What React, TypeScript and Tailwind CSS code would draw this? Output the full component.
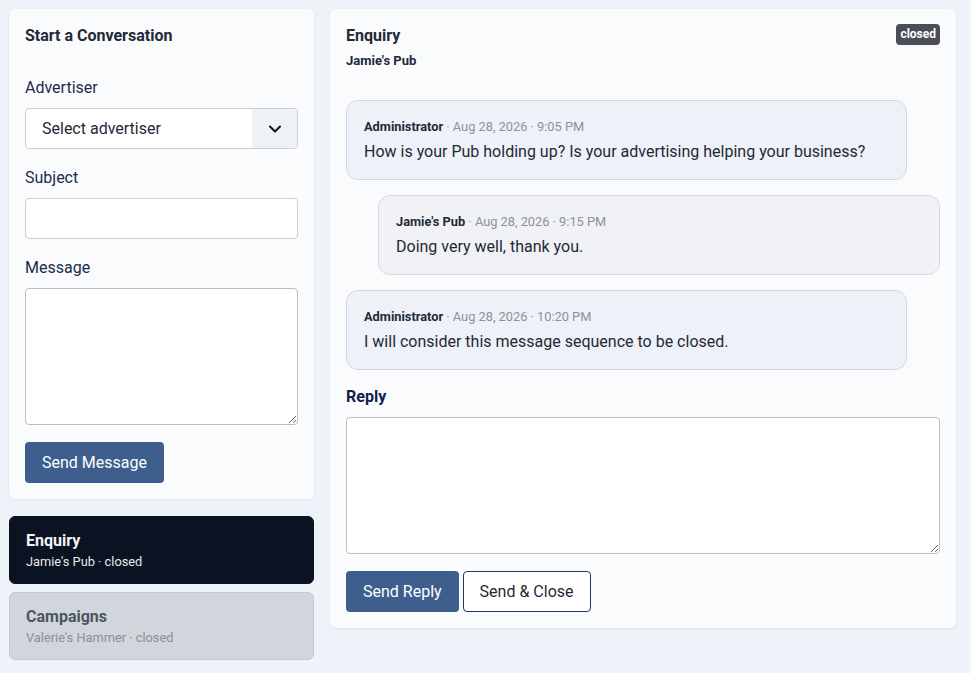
import { ChevronDown } from 'lucide-react'

const messages = [
  { author: 'Administrator', time: 'Aug 28, 2026 · 9:05 PM', body: 'How is your Pub holding up? Is your advertising helping your business?', mine: true },
  { author: "Jamie's Pub", time: 'Aug 28, 2026 · 9:15 PM', body: 'Doing very well, thank you.', mine: false },
  { author: 'Administrator', time: 'Aug 28, 2026 · 10:20 PM', body: 'I will consider this message sequence to be closed.', mine: true },
]

const conversations = [
  { title: 'Enquiry', sub: "Jamie's Pub · closed", active: true },
  { title: 'Campaigns', sub: "Valerie's Hammer · closed", active: false },
]

export default function App() {
  return (
    <div className="min-h-[673px] bg-[#eef2f9] p-[9px] font-['Roboto',sans-serif] text-[#1f2937]">
      <div className="flex gap-4">
        <aside className="w-[305px] shrink-0">
          <div className="rounded-md bg-[#f9fbfd] px-4 pb-4 pt-[17px] shadow-[0_1px_3px_rgba(15,23,42,0.06)]">
            <h2 className="text-base font-bold leading-5 text-[#1f2937]">Start a Conversation</h2>

            <label className="mt-[30px] block text-base leading-6 text-[#1b2b4b]">Advertiser</label>
            <div className="mt-[8px] flex h-[41px] overflow-hidden rounded border border-[#c9ced6] bg-white">
              <div className="flex flex-1 items-center pl-4 text-base text-[#1f2937]">Select advertiser</div>
              <div className="flex w-[45px] items-center justify-center bg-[#eef1f6]">
                <ChevronDown className="h-5 w-5 text-[#111827]" strokeWidth={2.5} />
              </div>
            </div>

            <label className="mt-[17px] block text-base leading-6 text-[#1b2b4b]">Subject</label>
            <div className="mt-[8px] h-[41px] rounded border border-[#c9ced6] bg-white" />

            <label className="mt-[17px] block text-base leading-6 text-[#1b2b4b]">Message</label>
            <textarea className="mt-[8px] block h-[137px] w-full resize-y rounded-sm border border-[#b9bec6] bg-white" />

            <button className="mt-[17px] h-[41px] rounded bg-[#3e5f8e] px-[17px] text-base text-white">Send Message</button>
          </div>

          <div className="mt-[17px] flex flex-col gap-2">
            {conversations.map((c) => (
              <div
                key={c.title}
                className={
                  c.active
                    ? 'h-[68px] rounded-md border border-[#0b1221] bg-[#0b1221] px-4 pt-[13px]'
                    : 'h-[68px] rounded-md border border-[#c4c9d1] bg-[#d1d5dc] px-4 pt-[13px]'
                }
              >
                <div className={c.active ? 'text-base font-bold leading-[22px] text-[#f3f4f6]' : 'text-base font-bold leading-[22px] text-[#4b5563]'}>
                  {c.title}
                </div>
                <div className={c.active ? 'mt-[1px] text-[12.8px] leading-[18px] text-[#e5e7eb]' : 'mt-[1px] text-[12.8px] leading-[18px] text-[#8a9099]'}>{c.sub}</div>
              </div>
            ))}
          </div>
        </aside>

        <main className="w-[626px] self-start rounded-md bg-[#f9fbfd] px-4 pb-4 pt-[17px] shadow-[0_1px_3px_rgba(15,23,42,0.06)]">
          <div className="flex items-start justify-between">
            <div>
              <h2 className="text-base font-bold leading-5 text-[#1f2937]">Enquiry</h2>
              <div className="mt-[6px] text-[13px] font-bold leading-[18px] text-[#1f2937]">Jamie's Pub</div>
            </div>
            <span className="-mt-[2px] rounded bg-[#4a4f57] px-1 text-xs font-bold leading-[21px] text-white">closed</span>
          </div>

          <div className="mt-[30px] flex flex-col gap-[15px]">
            {messages.map((m, i) => (
              <div
                key={i}
                className={
                  m.mine
                    ? 'mr-[33px] rounded-xl border border-[#d3d8e0] bg-[#eef1f7] px-[17px] pb-[15px] pt-[17px]'
                    : 'ml-[32px] rounded-xl border border-[#d6d9de] bg-[#f1f2f5] px-[17px] pb-[15px] pt-[17px]'
                }
              >
                <div className="text-[12.8px] leading-[18px]">
                  <span className="font-bold text-[#1f2937]">{m.author}</span>
                  <span className="text-[#8b919a]"> · {m.time}</span>
                </div>
                <div className="mt-1 text-base leading-6 text-[#1f2937]">{m.body}</div>
              </div>
            ))}
          </div>

          <label className="mt-[15px] block text-base font-bold leading-6 text-[#0f1f4a]">Reply</label>
          <textarea className="mt-[8px] block h-[137px] w-full resize-y rounded-sm border border-[#b9bec6] bg-white" />

          <div className="mt-[17px] flex gap-1">
            <button className="h-[41px] rounded bg-[#3e5f8e] px-[17px] text-base text-white">Send Reply</button>
            <button className="h-[41px] rounded border border-[#1e3a5f] bg-white px-4 text-base text-[#1f2937]">Send &amp; Close</button>
          </div>
        </main>
      </div>
    </div>
  )
}
